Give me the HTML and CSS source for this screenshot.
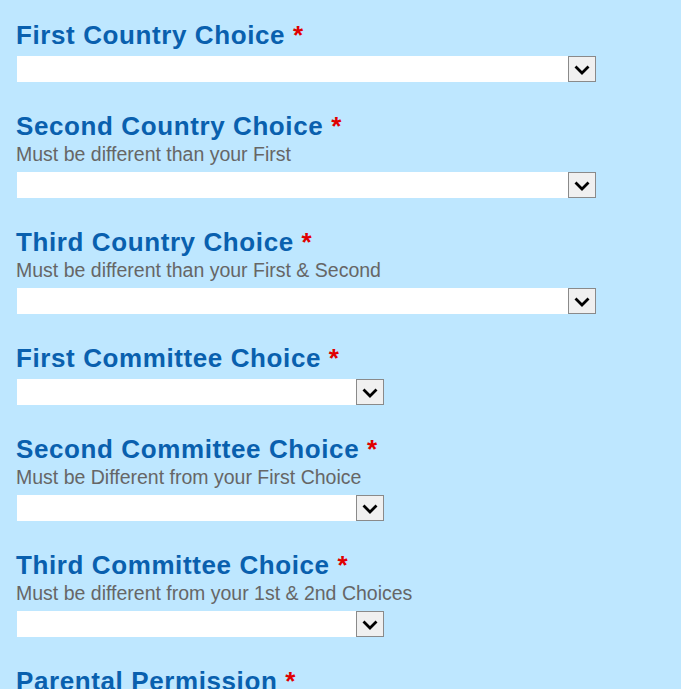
FILE: index.html
```html
<!DOCTYPE html>
<html>
<head>
<meta charset="utf-8">
<link rel="stylesheet" href="styles.css">
</head>
<body>
<form class="form">
  <div class="field">
    <div class="label">First Country Choice <span class="req">*</span></div>
    <div class="select wide"><div class="box"></div><div class="btn"><svg width="16" height="10" viewBox="0 0 16 10"><path d="M1.5 1.5 L8 8 L14.5 1.5" fill="none" stroke="#000" stroke-width="2.8"/></svg></div></div>
  </div>
  <div class="field">
    <div class="label">Second Country Choice <span class="req">*</span></div>
    <div class="hint">Must be different than your First</div>
    <div class="select wide"><div class="box"></div><div class="btn"><svg width="16" height="10" viewBox="0 0 16 10"><path d="M1.5 1.5 L8 8 L14.5 1.5" fill="none" stroke="#000" stroke-width="2.8"/></svg></div></div>
  </div>
  <div class="field">
    <div class="label">Third Country Choice <span class="req">*</span></div>
    <div class="hint">Must be different than your First &amp; Second</div>
    <div class="select wide"><div class="box"></div><div class="btn"><svg width="16" height="10" viewBox="0 0 16 10"><path d="M1.5 1.5 L8 8 L14.5 1.5" fill="none" stroke="#000" stroke-width="2.8"/></svg></div></div>
  </div>
  <div class="field">
    <div class="label">First Committee Choice <span class="req">*</span></div>
    <div class="select narrow"><div class="box"></div><div class="btn"><svg width="16" height="10" viewBox="0 0 16 10"><path d="M1.5 1.5 L8 8 L14.5 1.5" fill="none" stroke="#000" stroke-width="2.8"/></svg></div></div>
  </div>
  <div class="field">
    <div class="label">Second Committee Choice <span class="req">*</span></div>
    <div class="hint">Must be Different from your First Choice</div>
    <div class="select narrow"><div class="box"></div><div class="btn"><svg width="16" height="10" viewBox="0 0 16 10"><path d="M1.5 1.5 L8 8 L14.5 1.5" fill="none" stroke="#000" stroke-width="2.8"/></svg></div></div>
  </div>
  <div class="field">
    <div class="label">Third Committee Choice <span class="req">*</span></div>
    <div class="hint">Must be different from your 1st &amp; 2nd Choices</div>
    <div class="select narrow"><div class="box"></div><div class="btn"><svg width="16" height="10" viewBox="0 0 16 10"><path d="M1.5 1.5 L8 8 L14.5 1.5" fill="none" stroke="#000" stroke-width="2.8"/></svg></div></div>
  </div>
  <div class="field">
    <div class="label">Parental Permission <span class="req">*</span></div>
  </div>
</form>
</body>
</html>
```
FILE: styles.css
```css
html, body {
  margin: 0;
  padding: 0;
  background: #bee7ff;
}
body {
  height: 689px;
  overflow: hidden;
  font-family: "Liberation Sans", Arial, sans-serif;
}
.form {
  padding: 20px 0 0 16px;
  display: flex;
  flex-direction: column;
  gap: 29px;
}
.field {
  display: flex;
  flex-direction: column;
}
.label {
  font-size: 26px;
  line-height: 31px;
  font-weight: bold;
  color: #0960ae;
  letter-spacing: 0.6px;
  white-space: nowrap;
}
.req {
  color: #e00000;
}
.hint {
  font-size: 19.5px;
  line-height: 25px;
  color: #666666;
  white-space: nowrap;
}
.select {
  display: flex;
  height: 26px;
  margin: 5px 0 0 1px;
}
.select.wide { width: 579px; }
.select.narrow { width: 367px; }
.box {
  flex: 1;
  background: #ffffff;
}
.btn {
  width: 28px;
  box-sizing: border-box;
  border: 1px solid #8a8a8a;
  background: #f0f0f0;
  display: flex;
  align-items: center;
  justify-content: center;
}
.btn svg {
  display: block;
  margin-top: 1px;
}
```
